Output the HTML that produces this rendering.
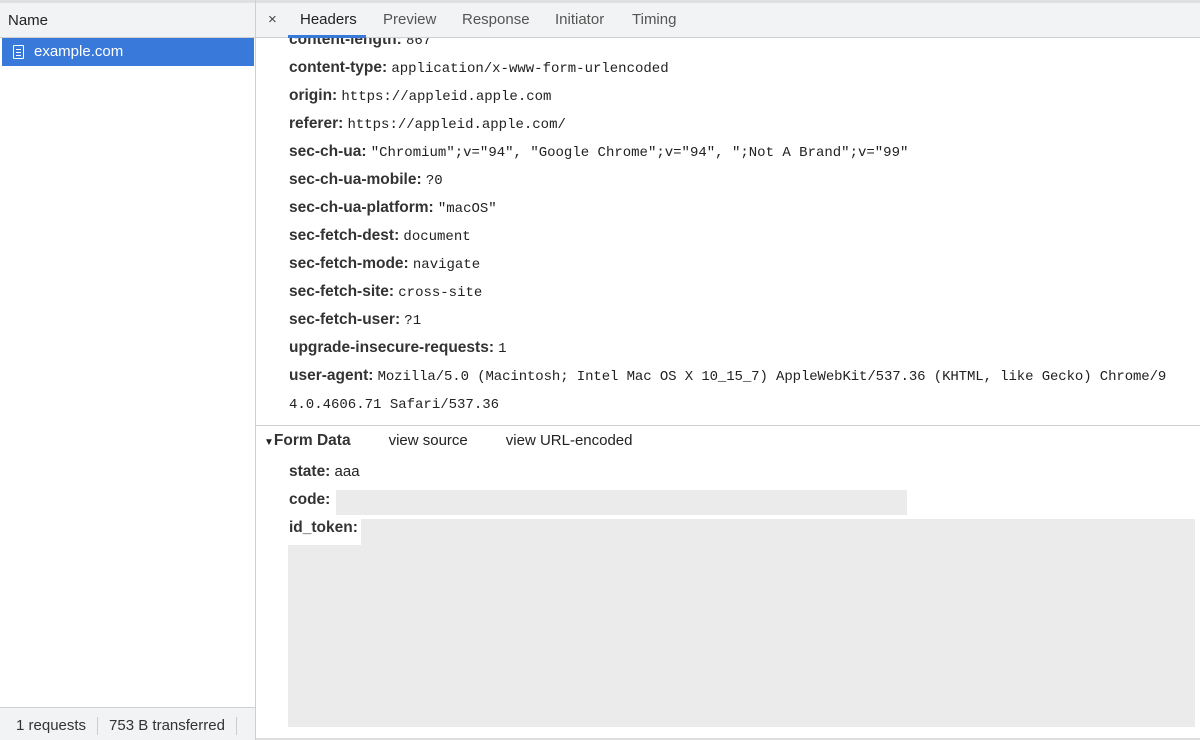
<!DOCTYPE html>
<html><head><meta charset="utf-8"><style>
*{margin:0;padding:0;box-sizing:border-box}
body{width:1200px;height:740px;overflow:hidden;background:#fff;font-family:"Liberation Sans",sans-serif;color:#222;position:relative}
.left{position:absolute;left:0;top:0;width:256px;height:740px;border-right:1px solid #cfcfcf}
.lh{position:absolute;left:0;top:0;width:255px;height:38px;background:#f1f3f4;border-bottom:1px solid #d0d0d0;border-top:3px solid #e0e0e0;font-size:15px;padding:9px 0 0 8px}
.sel{position:absolute;left:2px;top:38px;width:252px;height:28px;background:#3879d9;color:#fff;font-size:15px;padding:5px 0 0 32px}
.ic{position:absolute;left:11px;top:7px;width:11px;height:14px;border:1.5px solid #fff;border-radius:1px}
.ic i{position:absolute;left:2px;width:5px;height:1px;background:#fff}
.foot{position:absolute;left:0;top:707px;width:255px;height:33px;background:#f1f3f4;border-top:1px solid #d0d0d0;font-size:15px;color:#333;padding:9px 0 0 16px}
.foot span.s{display:inline-block;width:1px;height:18px;background:#ccc;vertical-align:middle;margin:0 11px 0 11px}
.tabs{position:absolute;left:256px;top:0;width:944px;height:38px;background:#f1f3f4;border-bottom:1px solid #d0d0d0;border-top:3px solid #e0e0e0;font-size:15px;color:#555}
.tabs span{position:absolute;top:8px}
.ul{position:absolute;left:288px;top:35px;width:78px;height:3px;background:#3879d9}
.r{position:absolute;left:289px;font-size:15px;white-space:nowrap}
.r b{font-weight:bold;color:#333;font-size:15.5px}
.m{font-family:"Liberation Mono",monospace;font-size:14px;color:#222}
.div{position:absolute;left:256px;top:425px;width:944px;height:1px;background:#d0d0d0}
.g{position:absolute;background:#ebebeb}
</style></head><body>
<div class="left">
<div class="lh">Name</div>
<div class="sel"><div class="ic"><i style="top:3px"></i><i style="top:6px"></i><i style="top:9px"></i></div>example.com</div>
<div class="foot">1 requests<span class="s"></span>753 B transferred<span class="s"></span></div>
</div>
<div class="tabs">
<span style="left:12px;color:#444">×</span>
<span style="left:44px;color:#222">Headers</span>
<span style="left:127px">Preview</span>
<span style="left:206px">Response</span>
<span style="left:299px">Initiator</span>
<span style="left:376px">Timing</span>
</div>
<div class="r" style="top:31px;clip-path:inset(7px 0 0 0)"><b>content-length:</b> <span class="m">867</span></div>
<div class="ul"></div>
<div class="r" style="top:59px"><b>content-type:</b> <span class="m">application/x-www-form-urlencoded</span></div>
<div class="r" style="top:87px"><b>origin:</b> <span class="m">https://appleid.apple.com</span></div>
<div class="r" style="top:115px"><b>referer:</b> <span class="m">https://appleid.apple.com/</span></div>
<div class="r" style="top:143px"><b>sec-ch-ua:</b> <span class="m">"Chromium";v="94", "Google Chrome";v="94", ";Not A Brand";v="99"</span></div>
<div class="r" style="top:171px"><b>sec-ch-ua-mobile:</b> <span class="m">?0</span></div>
<div class="r" style="top:199px"><b>sec-ch-ua-platform:</b> <span class="m">"macOS"</span></div>
<div class="r" style="top:227px"><b>sec-fetch-dest:</b> <span class="m">document</span></div>
<div class="r" style="top:255px"><b>sec-fetch-mode:</b> <span class="m">navigate</span></div>
<div class="r" style="top:283px"><b>sec-fetch-site:</b> <span class="m">cross-site</span></div>
<div class="r" style="top:311px"><b>sec-fetch-user:</b> <span class="m">?1</span></div>
<div class="r" style="top:339px"><b>upgrade-insecure-requests:</b> <span class="m">1</span></div>
<div class="r" style="top:367px"><b>user-agent:</b> <span class="m" style="letter-spacing:-0.1px">Mozilla/5.0 (Macintosh; Intel Mac OS X 10_15_7) AppleWebKit/537.36 (KHTML, like Gecko) Chrome/9</span></div>
<div class="r" style="top:395px"><span class="m">4.0.4606.71 Safari/537.36</span></div>
<div class="div"></div>
<div class="r" style="left:264px;top:432px"><span style="font-size:10px">▼</span><b>Form Data</b><span style="margin-left:38px">view source</span><span style="margin-left:38px">view URL-encoded</span></div>
<div class="r" style="top:463px"><b>state:</b> aaa</div>
<div class="r" style="top:491px"><b>code:</b></div>
<div class="r" style="top:519px"><b>id_token:</b></div>
<div class="g" style="left:336px;top:490px;width:571px;height:25px"></div>
<div class="g" style="left:361px;top:519px;width:834px;height:28px"></div>
<div class="g" style="left:288px;top:545px;width:907px;height:182px"></div>
<div style="position:absolute;left:256px;top:738px;width:944px;height:2px;background:#ddd"></div>
</body></html>
